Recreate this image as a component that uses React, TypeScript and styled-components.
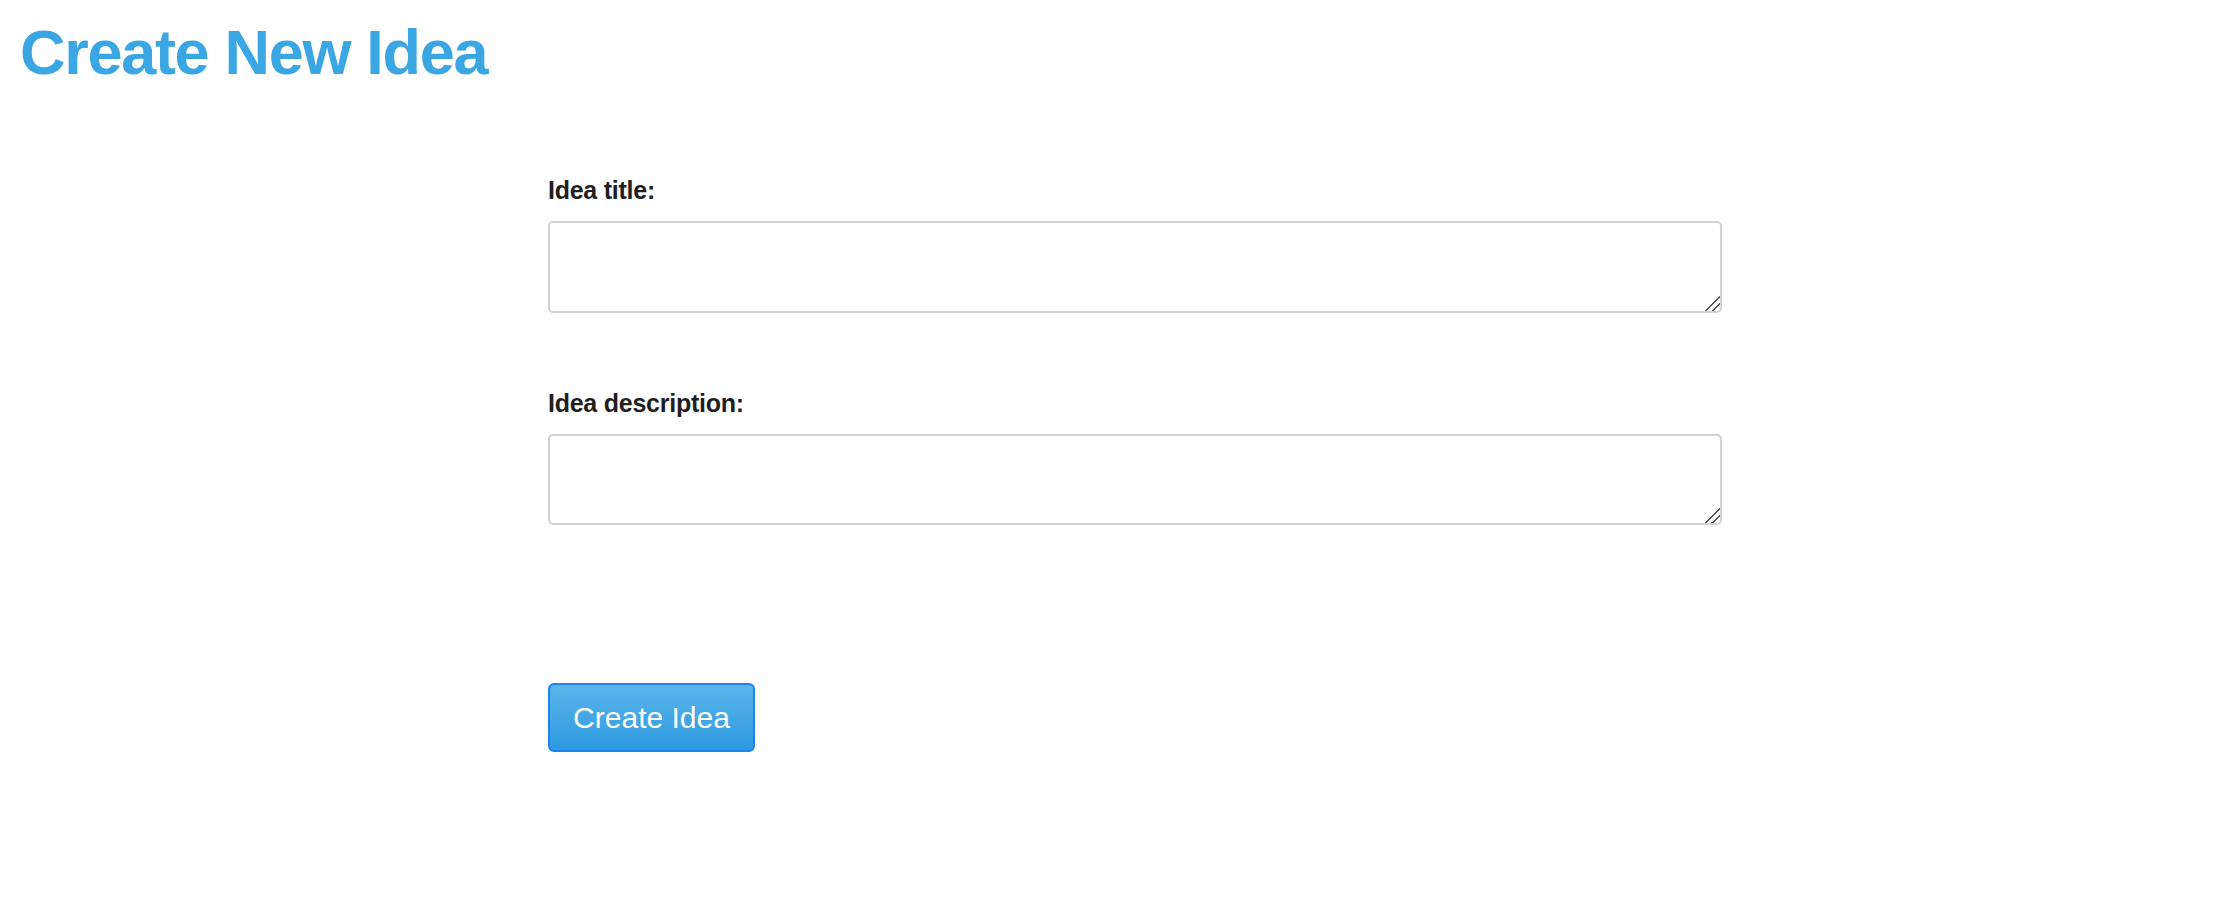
import React from "react";
import styled, { createGlobalStyle } from "styled-components";

const Global = createGlobalStyle`
  html, body { margin: 0; padding: 0; background: #ffffff; }
  body { font-family: "Liberation Sans", Arial, Helvetica, sans-serif; }
`;

const Page = styled.div`
  display: flex;
  flex-direction: column;
  padding: 16px 0 0 20px;
`;

const Title = styled.h1`
  margin: 0;
  font-size: 63px;
  line-height: 72px;
  font-weight: 700;
  letter-spacing: -1.3px;
  color: #3aa6e3;
`;

const Form = styled.form`
  display: flex;
  flex-direction: column;
  width: 1174px;
  margin: 87px 0 0 528px;
`;

const Field = styled.div<{ $gap: number }>`
  display: flex;
  flex-direction: column;
  gap: 16px;
  margin-bottom: ${(p) => p.$gap}px;
`;

const Label = styled.label`
  font-size: 25px;
  line-height: 30px;
  font-weight: 700;
  letter-spacing: -0.25px;
  color: #1f1f1f;
`;

const TextArea = styled.textarea<{ $h: number }>`
  box-sizing: border-box;
  width: 100%;
  height: ${(p) => p.$h}px;
  border: 2px solid #cfd3d8;
  border-radius: 5px;
  background: #fff;
  font-family: inherit;
  font-size: 24px;
  padding: 8px;
  resize: both;
  outline: none;

  &::-webkit-resizer {
    background: linear-gradient(
      135deg,
      transparent 0 48%,
      #555 48% 56%,
      transparent 56% 70%,
      #555 70% 78%,
      transparent 78%
    );
  }
`;

const Button = styled.button`
  align-self: flex-start;
  box-sizing: border-box;
  width: 207px;
  height: 69px;
  border: 2px solid #1f82f2;
  border-radius: 6px;
  background: linear-gradient(to bottom, #5bb5ea 0%, #2c9ae0 100%);
  color: #ffffff;
  font-family: inherit;
  font-size: 30px;
  font-weight: 400;
  letter-spacing: 0;
  cursor: pointer;
  padding: 0;
`;

export default function App() {
  return (
    <>
      <Global />
      <Page>
        <Title>Create New Idea</Title>
        <Form onSubmit={(e) => e.preventDefault()}>
          <Field $gap={75}>
            <Label htmlFor="title">Idea title:</Label>
            <TextArea id="title" $h={92} />
          </Field>
          <Field $gap={158}>
            <Label htmlFor="desc">Idea description:</Label>
            <TextArea id="desc" $h={91} />
          </Field>
          <Button type="submit">Create Idea</Button>
        </Form>
      </Page>
    </>
  );
}
